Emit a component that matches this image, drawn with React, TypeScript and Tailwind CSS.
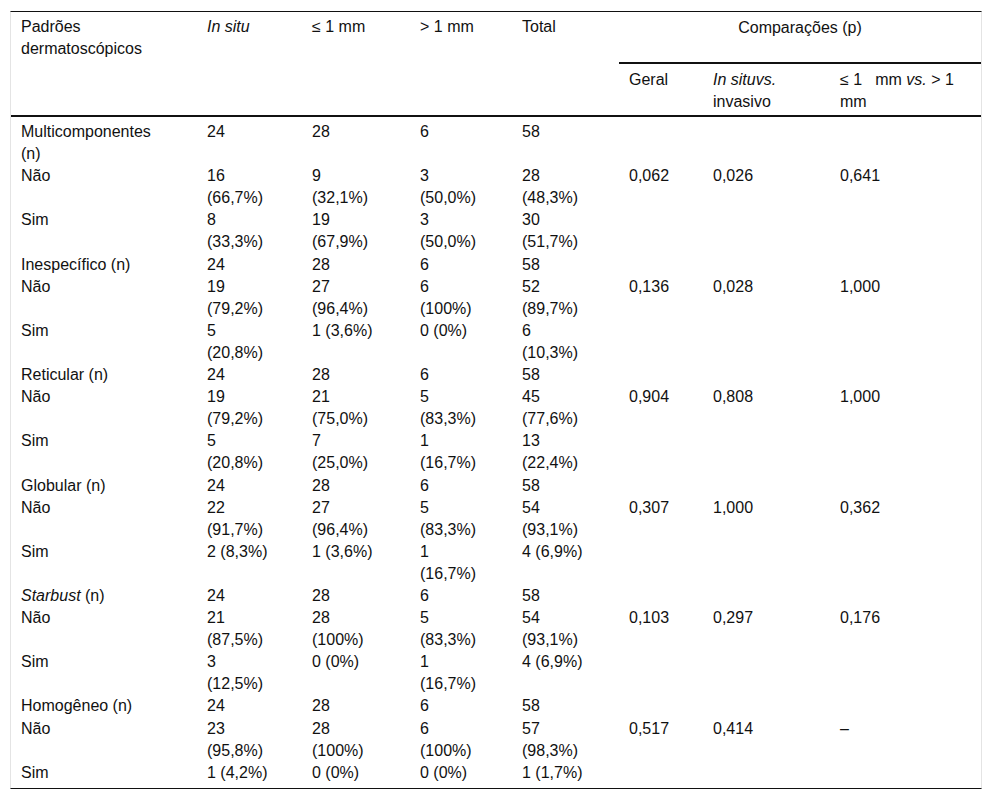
import React from "react";

type Cell = string | string[];

type Row = {
  label: React.ReactNode;
  cells: Cell[];
  p?: [string, string, string];
};

const COLS = [186, 105, 108, 102, 107, 84, 127, 151];

const n = (label: React.ReactNode): Row => ({ label, cells: ["24", "28", "6", "58"] });

const ROWS: Row[] = [
  { label: ["Multicomponentes", "(n)"].join("\n"), cells: ["24", "28", "6", "58"] },
  {
    label: "Não",
    cells: [["16", "(66,7%)"], ["9", "(32,1%)"], ["3", "(50,0%)"], ["28", "(48,3%)"]],
    p: ["0,062", "0,026", "0,641"],
  },
  { label: "Sim", cells: [["8", "(33,3%)"], ["19", "(67,9%)"], ["3", "(50,0%)"], ["30", "(51,7%)"]] },
  n("Inespecífico (n)"),
  {
    label: "Não",
    cells: [["19", "(79,2%)"], ["27", "(96,4%)"], ["6", "(100%)"], ["52", "(89,7%)"]],
    p: ["0,136", "0,028", "1,000"],
  },
  { label: "Sim", cells: [["5", "(20,8%)"], "1 (3,6%)", "0 (0%)", ["6", "(10,3%)"]] },
  n("Reticular (n)"),
  {
    label: "Não",
    cells: [["19", "(79,2%)"], ["21", "(75,0%)"], ["5", "(83,3%)"], ["45", "(77,6%)"]],
    p: ["0,904", "0,808", "1,000"],
  },
  { label: "Sim", cells: [["5", "(20,8%)"], ["7", "(25,0%)"], ["1", "(16,7%)"], ["13", "(22,4%)"]] },
  n("Globular (n)"),
  {
    label: "Não",
    cells: [["22", "(91,7%)"], ["27", "(96,4%)"], ["5", "(83,3%)"], ["54", "(93,1%)"]],
    p: ["0,307", "1,000", "0,362"],
  },
  { label: "Sim", cells: ["2 (8,3%)", "1 (3,6%)", ["1", "(16,7%)"], "4 (6,9%)"] },
  n(
    <>
      <i>Starbust</i> (n)
    </>
  ),
  {
    label: "Não",
    cells: [["21", "(87,5%)"], ["28", "(100%)"], ["5", "(83,3%)"], ["54", "(93,1%)"]],
    p: ["0,103", "0,297", "0,176"],
  },
  { label: "Sim", cells: [["3", "(12,5%)"], "0 (0%)", ["1", "(16,7%)"], "4 (6,9%)"] },
  n("Homogêneo (n)"),
  {
    label: "Não",
    cells: [["23", "(95,8%)"], ["28", "(100%)"], ["6", "(100%)"], ["57", "(98,3%)"]],
    p: ["0,517", "0,414", "–"],
  },
  { label: "Sim", cells: ["1 (4,2%)", "0 (0%)", "0 (0%)", "1 (1,7%)"] },
];

function Lines({ value }: { value: Cell }) {
  const lines = Array.isArray(value) ? value : [value];
  return (
    <>
      {lines.map((l, i) => (
        <div key={i}>{l}</div>
      ))}
    </>
  );
}

export default function App() {
  const head = "align-top text-left font-normal pl-[10px] pr-1 whitespace-nowrap";
  return (
    <div className="bg-white min-h-[801px] pl-[10px] pt-[11px] pr-[10px] font-['Liberation_Sans',Arial,sans-serif] text-[16px] leading-[22.1px] text-[#111]">
      <div className="w-[972px] border-t border-b border-t-[#111] border-b-[#111] border-x border-x-[#e4e4e4]">
        <table className="table-fixed border-separate border-spacing-0 w-[970px]">
          <colgroup>
            {COLS.map((w, i) => (
              <col key={i} style={{ width: w }} />
            ))}
          </colgroup>
          <thead>
            <tr className="h-[52px]">
              <th rowSpan={2} className={`${head} pt-[4px] border-b-2 border-[#111]`}>
                Padrões
                <br />
                dermatoscópicos
              </th>
              <th rowSpan={2} className={`${head} pt-[4px] border-b-2 border-[#111] italic`}>
                In situ
              </th>
              <th rowSpan={2} className={`${head} pt-[4px] border-b-2 border-[#111]`}>
                ≤ 1 mm
              </th>
              <th rowSpan={2} className={`${head} pt-[4px] border-b-2 border-[#111]`}>
                &gt; 1 mm
              </th>
              <th rowSpan={2} className={`${head} pt-[4px] border-b-2 border-[#111]`}>
                Total
              </th>
              <th colSpan={3} className="align-top text-center font-normal pt-[5px] border-b-2 border-[#111]">
                Comparações (p)
              </th>
            </tr>
            <tr className="h-[53px]">
              <th className={`${head} pt-[5px] border-b-2 border-[#111]`}>Geral</th>
              <th className={`${head} pt-[5px] border-b-2 border-[#111]`}>
                <i>In situvs.</i>
                <br />
                invasivo
              </th>
              <th className={`${head} pt-[5px] border-b-2 border-[#111]`}>
                ≤ 1
                <span className="ml-[13px]">
                  mm <i>vs.</i> &gt; 1
                </span>
                <br />
                mm
              </th>
            </tr>
          </thead>
          <tbody>
            {ROWS.map((row, r) => {
              const pad = r === 0 ? "pt-[4px]" : r === ROWS.length - 1 ? "pb-[4px]" : "";
              const cell = `align-top pl-[10px] pr-1 whitespace-nowrap ${pad}`;
              const label =
                typeof row.label === "string" ? <Lines value={row.label.split("\n")} /> : row.label;
              return (
                <tr key={r}>
                  <td className={cell}>{label}</td>
                  {row.cells.map((c, i) => (
                    <td key={i} className={cell}>
                      <Lines value={c} />
                    </td>
                  ))}
                  {[0, 1, 2].map((i) => (
                    <td key={`p${i}`} className={cell}>
                      {row.p ? row.p[i] : ""}
                    </td>
                  ))}
                </tr>
              );
            })}
          </tbody>
        </table>
      </div>
    </div>
  );
}
